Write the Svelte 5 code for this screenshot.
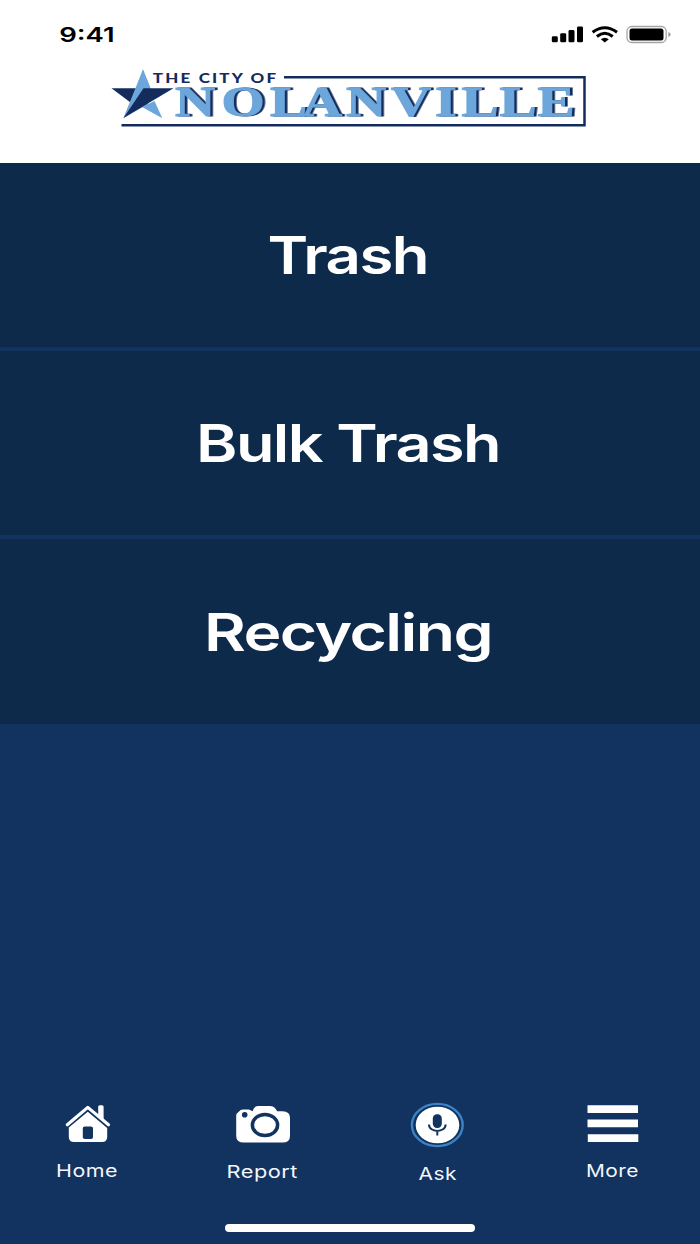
<script>
  const sections = [
    { name: 'Trash', x: 267.5, width: 160.5, y: 58.7 },
    { name: 'Bulk Trash', x: 196, width: 304, y: 59 },
    { name: 'Recycling', x: 204, width: 288, y: 59.8 }
  ];
  const tabs = [
    { name: 'Home', x: 56, width: 62, y: 86.5 },
    { name: 'Report', x: 51.5, width: 71.5, y: 88 },
    { name: 'Ask', x: 68.5, width: 38.5, y: 89.5 },
    { name: 'More', x: 61, width: 53, y: 86.5 }
  ];
  const letterX = [175, 221.5, 270, 302, 346, 391, 435, 461.5, 499.5, 537.5].map((x) => x / 1.32).join(' ');
</script>

<div class="screen">
  <header>
    <div class="status">
      <svg width="62" height="24" viewBox="58 22 62 24" aria-label="9:41">
        <text class="time" x="59.2" y="42.3" textLength="55.5" lengthAdjust="spacingAndGlyphs">9:41</text>
      </svg>
      <svg width="122" height="24" viewBox="550 22 122 24" aria-hidden="true">
        <rect x="551.8" y="36.3" width="6" height="6" rx="1.4" />
        <rect x="560.2" y="33.2" width="6" height="9.1" rx="1.4" />
        <rect x="568.5" y="30" width="6" height="12.3" rx="1.4" />
        <rect x="577" y="26.5" width="6" height="15.8" rx="1.4" />
        <g fill="none" stroke="#000" stroke-width="3">
          <path d="M592.6 32.2Q604.8 23.2 617 32.2" />
          <path d="M596.9 36.5Q604.8 30 612.7 36.5" />
        </g>
        <path d="M600.8 39.2Q604.8 36.1 608.8 39.2L604.8 42.6Z" />
        <rect x="627" y="26.5" width="39.2" height="16" rx="4.8" fill="none" stroke="#a5a5a5" stroke-width="1.3" />
        <rect x="629.5" y="28.6" width="34" height="12" rx="2.5" />
        <path d="M668.4 32V37Q670.6 36.4 670.6 34.5T668.4 32Z" fill="#999" />
      </svg>
    </div>
    <svg class="logo" width="480" height="62" viewBox="108 68 480 62" aria-label="The City of Nolanville">
      <path d="M284 77.3H584.5V125.2H121.5" fill="none" stroke="#142c5b" stroke-width="2.5" />
      <path d="M111.5 88.3H138L130.5 102.5Z" fill="#142c5b" />
      <path d="M143 69.5L150.5 88.3L145 100L162.2 118L143 107L123.5 118Z" fill="#6ca6da" />
      <path d="M143 69.5L136 88.3L123.5 118L150.5 92V88.3Z" fill="#6ca6da" />
      <path d="M154.5 101L162.2 118L142 107Z" fill="#6ca6da" />
      <path d="M143.5 88.3H173.5L123.5 118Z" fill="#142c5b" />
      <text class="city" x="152.8" y="83" textLength="125.5" lengthAdjust="spacingAndGlyphs">THE CITY OF</text>
      <g transform="scale(1.32 1)">
        <text class="name" x={letterX} y="116.5">NOLANVILLE</text>
      </g>
    </svg>
  </header>

  <main>
    {#each sections as section}
      <button class="section">
        <svg width="700" height="80" viewBox="0 0 700 80">
          <text class="title" x={section.x} y={section.y} textLength={section.width} lengthAdjust="spacingAndGlyphs">{section.name}</text>
        </svg>
      </button>
    {/each}
  </main>

  <nav>
    {#each tabs as tab, i}
      <button class="tab">
        <svg width="175" height="110" viewBox="0 0 175 110">
          {#if i === 0}
            <g fill="#fff">
              <path d="M98.2 16.8Q98.2 15.2 99.8 15.2H102Q103.6 15.2 103.6 16.8V30L98.2 25.5Z" />
              <path d="M67.3 34.8L87.8 17.4L108.5 34.8" fill="none" stroke="#fff" stroke-width="3.2" stroke-linecap="round" stroke-linejoin="round" />
              <path fill-rule="evenodd" d="M87.8 21.8L107.2 38V47Q107.2 52 102 52H74Q68.8 52 68.8 47V37.5ZM84.8 36.5Q82.8 36.5 82.8 38.2V47.3Q82.8 49 84.8 49H91Q93 49 93 47.3V38.2Q93 36.5 91 36.5Z" />
            </g>
          {:else if i === 1}
            <path d="M68 19.5H74L77.5 21.3Q79 16 83 16H95Q98.2 16 100 18L102.2 21.3H107.5Q115 21.3 115 28V46Q115 52.6 107.5 52.6H69Q61.2 52.6 61.2 46V26Q61.2 23.5 64 21.6Q65.2 19.5 68 19.5Z" fill="#fff" />
            <circle cx="69.7" cy="24.7" r="2.8" fill="#12325f" />
            <ellipse cx="90" cy="35" rx="12.6" ry="10.6" fill="none" stroke="#12325f" stroke-width="3.5" />
          {:else if i === 2}
            <ellipse cx="87.3" cy="35" rx="25.4" ry="21.1" fill="none" stroke="#3c83c5" stroke-width="2.4" />
            <ellipse cx="87.5" cy="35" rx="21.8" ry="18.3" fill="#fff" />
            <rect x="82.8" y="24.3" width="9" height="13.7" rx="4.2" fill="#12325f" />
            <path d="M79 34.5C79 43 95.6 43 95.6 34.5M87.3 41V45.5" fill="none" stroke="#12325f" stroke-width="2" />
          {:else}
            <path d="M62.5 15.3H113V23H62.5ZM62.5 29.6H113V37.3H62.5ZM62.8 44.3H113.3V52H62.8Z" fill="#fff" />
          {/if}
          <text class="label" x={tab.x} y={tab.y} textLength={tab.width} lengthAdjust="spacingAndGlyphs">{tab.name}</text>
        </svg>
      </button>
    {/each}
  </nav>
  <div class="indicator"></div>
</div>

<style>
  :global(body) { margin: 0; }
  .screen {
    width: 700px;
    height: 1244px;
    display: flex;
    flex-direction: column;
    overflow: hidden;
    background: #12325f;
    font-family: Inter, sans-serif;
  }
  svg { display: block; flex: none; }
  button { padding: 0; border: 0; background: none; font: inherit; }
  header {
    flex: none;
    box-sizing: border-box;
    height: 162.5px;
    padding-top: 22px;
    background: #fff;
  }
  .status {
    display: flex;
    justify-content: space-between;
    padding: 0 28px 0 58px;
  }
  .logo { margin: 22px 0 0 108px; }
  .time { font-size: 20.5px; font-weight: 600; }
  .city { font: 900 13px Lato, sans-serif; letter-spacing: 1.7px; fill: #142c5b; }
  .name {
    font: 700 42px "Liberation Serif", serif;
    fill: #6ca6da;
    stroke: #6ca6da;
    stroke-width: 1px;
    filter: drop-shadow(2.6px 0 0 #142c5b);
  }
  main { display: flex; flex-direction: column; gap: 4px; }
  .section {
    display: flex;
    height: 184.4px;
    padding-top: 52px;
    box-sizing: border-box;
    background: #0e2a4b;
  }
  .title { font-size: 52px; font-weight: 600; letter-spacing: -1.3px; fill: #fff; }
  nav {
    display: grid;
    grid-template-columns: repeat(4, 1fr);
    margin-top: auto;
    height: 110px;
  }
  .label { font-size: 17.5px; letter-spacing: .4px; fill: #f4f7fb; }
  .indicator {
    flex: none;
    width: 250px;
    height: 8px;
    margin: 23.5px auto 12.5px;
    border-radius: 4px;
    background: #fff;
  }
</style>
